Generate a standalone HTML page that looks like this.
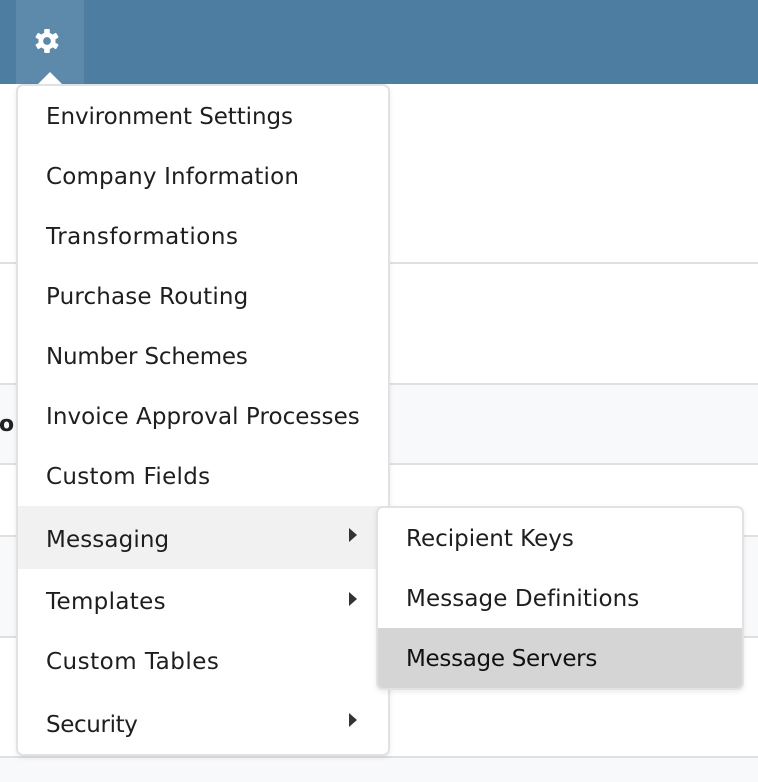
<!DOCTYPE html>
<html><head><meta charset="utf-8"><style>
html,body{margin:0;padding:0;background:#fff}
#p{position:relative;width:758px;height:782px;overflow:hidden;background:#fff;font-family:"DejaVu Sans","Liberation Sans",sans-serif;color:#1e1e1e}
#p div{position:absolute}
.l{left:0;width:758px;height:2px;background:#e0e0e0}
.b{left:0;width:758px;background:#f8f9fb}
.m{background:#fff;border:2px solid #e2e2e2;border-radius:7px;box-sizing:border-box;box-shadow:0 2px 6px rgba(0,0,0,.08)}
.t{font-size:23px;line-height:30px;white-space:nowrap;letter-spacing:0}
.a{width:0;height:0;border-left:8px solid #333;border-top:7.5px solid transparent;border-bottom:7.5px solid transparent}
</style></head><body><div id="p">
<div style="left:0;top:0;width:758px;height:84px;background:#4d7ea2"></div>
<div style="left:16px;top:0;width:68px;height:84px;background:#5d89aa"></div>
<svg style="position:absolute;left:35px;top:29px" width="24" height="24" viewBox="-12 -12 24 24"><g fill="#fff"><rect x="-2.8" y="-12" width="5.6" height="5" rx="1"/><rect x="-2.8" y="-12" width="5.6" height="5" rx="1" transform="rotate(60)"/><rect x="-2.8" y="-12" width="5.6" height="5" rx="1" transform="rotate(120)"/><rect x="-2.8" y="-12" width="5.6" height="5" rx="1" transform="rotate(180)"/><rect x="-2.8" y="-12" width="5.6" height="5" rx="1" transform="rotate(240)"/><rect x="-2.8" y="-12" width="5.6" height="5" rx="1" transform="rotate(300)"/></g><circle r="6.2" fill="none" stroke="#fff" stroke-width="4.6"/></svg>
<div style="left:38px;top:72px;width:0;height:0;border-left:12px solid transparent;border-right:12px solid transparent;border-bottom:12px solid #fff"></div>

<div class="l" style="top:262px"></div>
<div class="b" style="top:385px;height:79px"></div>
<div class="l" style="top:383px"></div>
<div class="l" style="top:463px"></div>
<div class="b" style="top:537px;height:99px"></div>
<div class="l" style="top:535px"></div>
<div class="l" style="top:636px"></div>
<div class="b" style="top:758px;height:24px"></div>
<div class="l" style="top:756px"></div>
<div style="left:-1px;top:410px;font:bold 22px/30px 'DejaVu Sans',sans-serif;color:#222">o</div>

<div class="m" style="left:16px;top:84px;width:374px;height:672px"></div>
<div style="left:18px;top:506px;width:370px;height:63px;background:#f1f1f1"></div>
<div class="t" style="left:46px;top:102px;letter-spacing:-.08px">Environment Settings</div>
<div class="t" style="left:46px;top:162px;letter-spacing:.17px">Company Information</div>
<div class="t" style="left:46px;top:222px;letter-spacing:.53px">Transformations</div>
<div class="t" style="left:46px;top:282px;letter-spacing:.15px">Purchase Routing</div>
<div class="t" style="left:46px;top:342px;letter-spacing:-.18px">Number Schemes</div>
<div class="t" style="left:46px;top:402px;letter-spacing:.06px">Invoice Approval Processes</div>
<div class="t" style="left:46px;top:462px;letter-spacing:.3px">Custom Fields</div>
<div class="t" style="left:46px;top:525px;letter-spacing:.11px">Messaging</div>
<div class="t" style="left:46px;top:587px;letter-spacing:.33px">Templates</div>
<div class="t" style="left:46px;top:647px;letter-spacing:.5px">Custom Tables</div>
<div class="t" style="left:46px;top:710px;letter-spacing:-.37px">Security</div>
<div class="a" style="left:349px;top:528px"></div>
<div class="a" style="left:349px;top:592px"></div>
<div class="a" style="left:349px;top:713px"></div>

<div class="m" style="left:376px;top:506px;width:368px;height:184px;overflow:hidden">
<div style="left:0;top:120px;width:364px;height:60px;background:#d5d5d5"></div>
</div>
<div class="t" style="left:406px;top:524px;letter-spacing:0">Recipient Keys</div>
<div class="t" style="left:406px;top:584px;letter-spacing:.1px">Message Definitions</div>
<div class="t" style="left:406px;top:644px;color:#111;letter-spacing:-.3px">Message Servers</div>
</div></body></html>
